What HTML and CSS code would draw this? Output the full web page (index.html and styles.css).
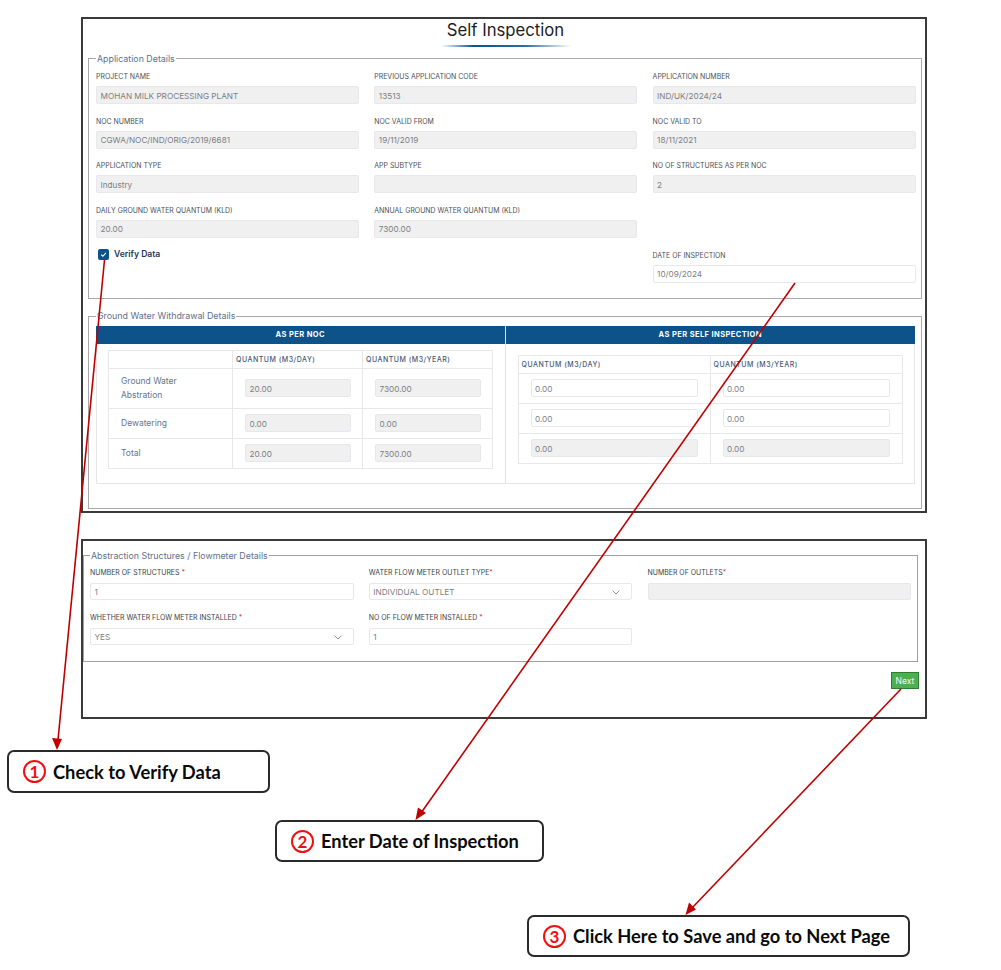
FILE: index.html
```html
<!DOCTYPE html>
<html lang="en">
<head>
<meta charset="utf-8">
<title>Self Inspection</title>
<link rel="stylesheet" href="styles.css">
</head>
<body>
<div class="page">
  <section class="panel panel-top">
    <header class="title-wrap">
      <h1 class="title">Self Inspection</h1>
      <div class="title-line"></div>
    </header>

    <fieldset class="group group-app">
      <legend>Application Details</legend>
      <div class="form-grid">
        <div class="field"><label>PROJECT NAME</label><input class="ctl ro" readonly value="MOHAN MILK PROCESSING PLANT"></div>
        <div class="field"><label>PREVIOUS APPLICATION CODE</label><input class="ctl ro" readonly value="13513"></div>
        <div class="field"><label>APPLICATION NUMBER</label><input class="ctl ro" readonly value="IND/UK/2024/24"></div>
        <div class="field"><label>NOC NUMBER</label><input class="ctl ro" readonly value="CGWA/NOC/IND/ORIG/2019/6681"></div>
        <div class="field"><label>NOC VALID FROM</label><input class="ctl ro" readonly value="19/11/2019"></div>
        <div class="field"><label>NOC VALID TO</label><input class="ctl ro" readonly value="18/11/2021"></div>
        <div class="field"><label>APPLICATION TYPE</label><input class="ctl ro" readonly value="Industry"></div>
        <div class="field"><label>APP SUBTYPE</label><input class="ctl ro" readonly value=""></div>
        <div class="field"><label>NO OF STRUCTURES AS PER NOC</label><input class="ctl ro" readonly value="2"></div>
        <div class="field"><label>DAILY GROUND WATER QUANTUM (KLD)</label><input class="ctl ro" readonly value="20.00"></div>
        <div class="field"><label>ANNUAL GROUND WATER QUANTUM (KLD)</label><input class="ctl ro" readonly value="7300.00"></div>
        <div class="field"></div>
        <div class="verify">
          <svg class="check" width="11" height="11" viewBox="0 0 11 11" aria-hidden="true"><rect width="11" height="11" rx="2" fill="#0d5289"/><path d="M3.2 5.7 L4.9 7.3 L7.9 3.9" fill="none" stroke="#fff" stroke-width="1.1"/></svg>
          <span>Verify Data</span>
        </div>
        <div class="field"></div>
        <div class="field"><label>DATE OF INSPECTION</label><input class="ctl" value="10/09/2024"></div>
      </div>
    </fieldset>

    <fieldset class="group group-water">
      <legend>Ground Water Withdrawal Details</legend>
      <div class="tabs">
        <div class="tab tab-left">
          <div class="tab-head">AS PER NOC</div>
          <table class="grid grid-noc">
            <colgroup><col class="c-name"><col class="c-val"><col class="c-val"></colgroup>
            <tr class="r-head"><th></th><th>QUANTUM (M3/DAY)</th><th>QUANTUM (M3/YEAR)</th></tr>
            <tr class="r-tall"><td class="name">Ground Water<br>Abstration</td><td class="val"><input class="ctl ro" readonly value="20.00"></td><td class="val"><input class="ctl ro" readonly value="7300.00"></td></tr>
            <tr class="r-std"><td class="name">Dewatering</td><td class="val"><input class="ctl ro" readonly value="0.00"></td><td class="val"><input class="ctl ro" readonly value="0.00"></td></tr>
            <tr class="r-std"><td class="name">Total</td><td class="val"><input class="ctl ro" readonly value="20.00"></td><td class="val"><input class="ctl ro" readonly value="7300.00"></td></tr>
          </table>
        </div>
        <div class="tab tab-right">
          <div class="tab-head">AS PER SELF INSPECTION</div>
          <table class="grid grid-self">
            <colgroup><col class="c-half"><col class="c-half"></colgroup>
            <tr class="r-head"><th>QUANTUM (M3/DAY)</th><th>QUANTUM (M3/YEAR)</th></tr>
            <tr class="r-std"><td class="val"><input class="ctl" value="0.00"></td><td class="val"><input class="ctl" value="0.00"></td></tr>
            <tr class="r-std"><td class="val"><input class="ctl" value="0.00"></td><td class="val"><input class="ctl" value="0.00"></td></tr>
            <tr class="r-std"><td class="val"><input class="ctl ro" readonly value="0.00"></td><td class="val"><input class="ctl ro" readonly value="0.00"></td></tr>
          </table>
        </div>
      </div>
    </fieldset>
  </section>

  <section class="panel panel-bottom">
    <fieldset class="group group-flow">
      <legend>Abstraction Structures / Flowmeter Details</legend>
      <div class="form-grid form-grid-flow">
        <div class="field"><label>NUMBER OF STRUCTURES <b>*</b></label><input class="ctl" value="1"></div>
        <div class="field"><label>WATER FLOW METER OUTLET TYPE<b>*</b></label>
          <div class="ctl select"><span>INDIVIDUAL OUTLET</span><svg width="8" height="5" viewBox="0 0 8 5" aria-hidden="true"><path d="M.6.7 4 4 7.4.7" fill="none" stroke="#8a94a6" stroke-width="1"/></svg></div>
        </div>
        <div class="field"><label>NUMBER OF OUTLETS<b>*</b></label><input class="ctl ro" readonly value=""></div>
        <div class="field"><label>WHETHER WATER FLOW METER INSTALLED <b>*</b></label>
          <div class="ctl select"><span>YES</span><svg width="8" height="5" viewBox="0 0 8 5" aria-hidden="true"><path d="M.6.7 4 4 7.4.7" fill="none" stroke="#8a94a6" stroke-width="1"/></svg></div>
        </div>
        <div class="field"><label>NO OF FLOW METER INSTALLED <b>*</b></label><input class="ctl" value="1"></div>
      </div>
    </fieldset>
    <div class="actions"><button class="next" type="button">Next</button></div>
  </section>

  <div class="callout callout-1"><span class="num">1</span><span>Check to Verify Data</span></div>
  <div class="callout callout-2"><span class="num">2</span><span>Enter Date of Inspection</span></div>
  <div class="callout callout-3"><span class="num">3</span><span>Click Here to Save and go to Next Page</span></div>

  <svg class="arrows" width="1001" height="970" viewBox="0 0 1001 970" aria-hidden="true">
    <g fill="none" stroke="#c00000" stroke-width="1.6">
      <path d="M104.500 260 58 740"/>
      <path d="M795 283 421 813"/>
      <path d="M901 689 692 908"/>
    </g>
    <g fill="#c00000">
      <path d="M57 750 52 738 62 739Z"/>
      <path d="M415.500 820 418 807.500 426 813Z"/>
      <path d="M685.500 915 689 902.500 696 909.500Z"/>
    </g>
  </svg>
</div>
</body>
</html>
```
FILE: styles.css
```css
* { box-sizing: border-box; }
html, body { margin: 0; padding: 0; background: #fff; }
body { font-family: Inter, "Liberation Sans", sans-serif; overflow: hidden; }

.page { position: relative; width: 1001px; height: 970px; padding-top: 17px; }

.panel { width: 846px; margin-left: 81px; border: 2px solid #3a3a3a; background: #fff; }
.panel-top { height: 496px; }
.panel-bottom { height: 180px; margin-top: 26px; }

.title-wrap { height: 28px; text-align: center; }
.title { margin: 0; padding-top: 1px; padding-left: 3px; font-size: 16.700px; line-height: 20px; font-weight: 400; color: #1c1c1c; }
.title-line { width: 130px; height: 2px; margin: 5px 0 0 358px; background: linear-gradient(90deg, rgba(13,82,137,0), #0d5289 25%, #2f6da0 65%, rgba(13,82,137,0)); }

.group { margin: 0; padding: 0; border: 1px solid #a8a8a8; min-width: 0; }
.group legend { margin-left: 0; padding: 0 1px; font-size: 8.850px; line-height: 12px; color: #60718c; white-space: nowrap; }

.group-app { margin: 4px 3px 0 5px; height: 248px; padding: 6px 6px 0 7px; }
.group-app legend { padding-top: 2px; }
.group-water { margin: 11px 3px 0 5px; height: 198.500px; padding: 4px 6px 0 7px; }
.group-flow { margin: 8.500px 7px 0 0; height: 112px; padding: 5.500px 6px 0 6px; border-color: #a0a0a0; }

.form-grid { display: grid; grid-template-columns: repeat(3, 263px); column-gap: 15.300px; row-gap: 11.670px; }
.form-grid-flow { row-gap: 12px; grid-template-columns: repeat(3, 263.500px); column-gap: 15.300px; }

.field label { display: block; height: 12px; margin-bottom: 3px; font-size: 6.950px; line-height: 12px; color: #4a4f57; white-space: nowrap; }
.field label b { font-weight: 400; color: #e53935; }
.form-grid-flow .field label { margin-bottom: 4px; color: #3e4247; }
.form-grid-flow .ctl { height: 17px; line-height: 14px; }

.ctl { display: block; width: 100%; height: 18px; margin: 0; padding: 1px 3.500px 0; border: 1px solid #e8e8ec; border-radius: 2px; background: #fff; font-family: inherit; font-size: 8.200px; line-height: 15px; color: #7b7e83; outline: none; }
.ctl.ro { background: #f0f0f0; }
.select { display: flex; align-items: center; justify-content: space-between; padding-right: 11px; }

.verify { display: flex; align-items: flex-start; gap: 5px; margin-top: -1px; padding-left: 2px; font-size: 8.600px; line-height: 11px; font-weight: 600; color: #1d3557; }
.check { flex: none; }

.tabs { display: grid; grid-template-columns: 409.500px 409.500px; }
.tab { height: 158px; border-bottom: 1px solid #e6e6e6; }
.tab-left { border-left: 1px solid #e6e6e6; border-right: 1px solid #e0e0e0; }
.tab-right { border-right: 1px solid #e6e6e6; }
.tab-head { height: 18px; background: #0d5289; color: #fff; font-size: 7.500px; line-height: 18px; font-weight: 700; letter-spacing: .4px; text-align: center; }
.tab-left .tab-head { margin-left: -1px; }
.tab-right .tab-head { margin-right: -1px; }

.grid { border-collapse: collapse; table-layout: fixed; }
.grid th, .grid td { border: 1px solid #e8e8e8; padding: 0; }
.grid th { padding-left: 3px; font-size: 7px; font-weight: 500; letter-spacing: .5px; text-align: left; color: #45597a; white-space: nowrap; }
.grid-noc { width: 384px; margin: 6px 0 0 11px; }
.grid-self { width: 384px; margin: 11px 0 0 12px; }
.c-name { width: 124px; }
.c-val { width: 130px; }
.c-half { width: 192px; }
.r-head { height: 17.500px; }
.r-tall { height: 40px; }
.r-std { height: 30px; }
.name { padding: 0 0 0 12px !important; font-size: 8.500px; line-height: 14px; color: #64748f; }
.val { padding: 0 12px !important; }
.grid-noc .val .ctl { width: 106px; }

.actions { display: flex; justify-content: flex-end; padding: 10.500px 6px 0 0; }
.next { width: 28px; height: 17px; padding: 0; border: 1px solid #2e7d32; background: #4caf50; color: #f4fbf4; font-family: inherit; font-size: 8.500px; line-height: 14px; }

.callout { display: flex; align-items: center; gap: 7px; height: 42px; border: 2px solid #2a2a2a; border-radius: 7px; background: #fff; font-family: Lato, "Liberation Sans", sans-serif; font-size: 18.300px; font-weight: 700; color: #0a0a0a; white-space: nowrap; }
.callout-1 { width: 263px; height: 43px; margin: 31px 0 0 7px; padding-left: 14px; }
.callout-2 { width: 269px; margin: 27px 0 0 275px; padding-left: 14px; }
.callout-3 { width: 383px; margin: 53px 0 0 527px; padding-left: 14px; }
.num { flex: none; display: flex; align-items: center; justify-content: center; width: 23px; height: 23px; border: 2px solid #f01010; border-radius: 50%; color: #f01010; font-size: 17px; line-height: 1; }

.arrows { position: absolute; left: 0; top: 0; pointer-events: none; }
```
